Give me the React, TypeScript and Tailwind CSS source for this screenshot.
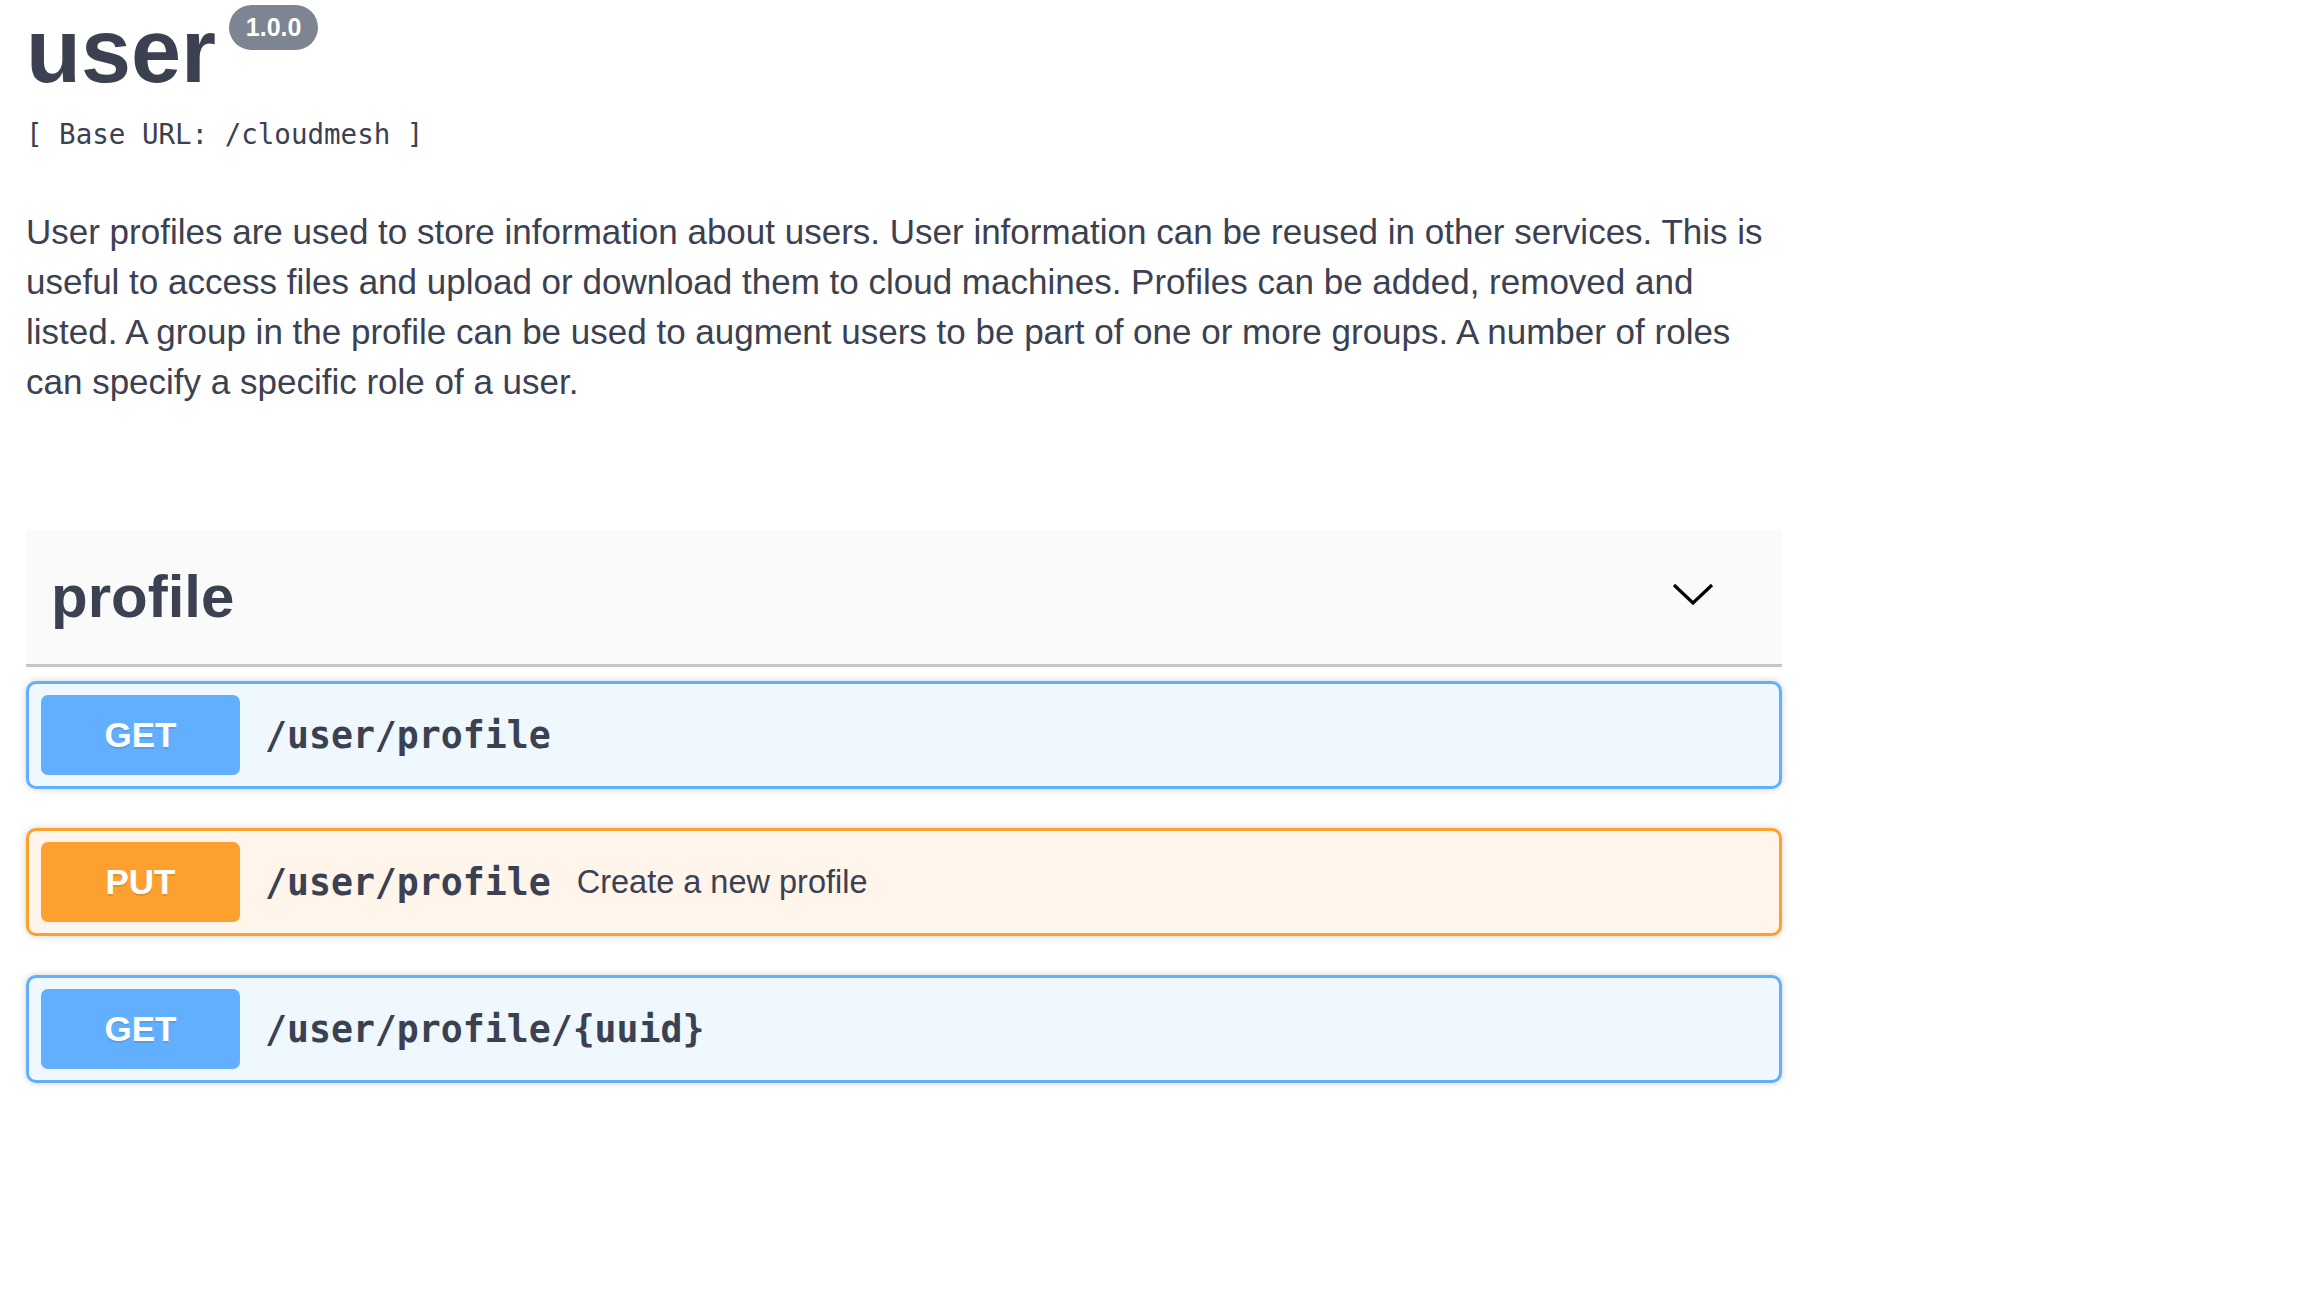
import React from 'react'

type Op = {
  method: 'GET' | 'PUT'
  path: string
  summary?: string
}

const OPS: Op[] = [
  { method: 'GET', path: '/user/profile' },
  { method: 'PUT', path: '/user/profile', summary: 'Create a new profile' },
  { method: 'GET', path: '/user/profile/{uuid}' },
]

function OpBlock({ op }: { op: Op }) {
  const isGet = op.method === 'GET'
  return (
    <div
      className={
        isGet
          ? 'flex items-center h-[108px] px-[12px] rounded-[10px] border-[3px] border-[#61affe] bg-[#eff7ff] shadow-[0_0_7px_rgba(0,0,0,0.19)]'
          : 'flex items-center h-[108px] px-[12px] rounded-[10px] border-[3px] border-[#fca130] bg-[#fff5ea] shadow-[0_0_7px_rgba(0,0,0,0.19)]'
      }
    >
      <div
        className={
          isGet
            ? 'flex items-center justify-center w-[199px] h-[80px] rounded-[7px] bg-[#61affe] text-white font-bold text-[35px] [text-shadow:0_2px_0_rgba(0,0,0,0.1)]'
            : 'flex items-center justify-center w-[199px] h-[80px] rounded-[7px] bg-[#fca130] text-white font-bold text-[35px] [text-shadow:0_2px_0_rgba(0,0,0,0.1)]'
        }
      >
        {op.method}
      </div>
      <span className="ml-[25px] mt-[2px] font-['DejaVu_Sans_Mono',monospace] font-bold text-[36.5px] text-[#3b4151]">
        {op.path}
      </span>
      {op.summary && (
        <span className="ml-[26px] text-[32.5px] text-[#3b4151]">{op.summary}</span>
      )}
    </div>
  )
}

export default function App() {
  return (
    <div className="min-h-screen bg-white font-['Liberation_Sans',Arial,sans-serif] text-[#3b4151]">
      <div className="w-[1756px] ml-[26px]">
        {/* info header */}
        <div className="flex items-start">
          <h1 className="mt-[6px] text-[90px] leading-[90px] font-bold">user</h1>
          <span className="mt-[5px] ml-[13px] flex items-center justify-center w-[89px] h-[45px] rounded-full bg-[#7d8492] text-white font-bold text-[25px]">
            1.0.0
          </span>
        </div>
        <pre className="mt-[25px] font-['DejaVu_Sans_Mono',monospace] text-[27.5px] leading-[27px]">
          [ Base URL: /cloudmesh ]
        </pre>
        <p className="mt-[59px] text-[35px] leading-[50px]">
          User profiles are used to store information about users. User information can be reused in other
          services. This is useful to access files and upload or download them to cloud machines. Profiles can be
          added, removed and listed. A group in the profile can be used to augment users to be part of one or more
          groups. A number of roles can specify a specific role of a user.
        </p>

        {/* tag section */}
        <div className="mt-[123px]">
          <div className="flex items-center justify-between h-[137px] pl-[25px] pr-[68px] bg-[#fafafa] border-b-[3px] border-[#c4c6cb]">
            <span className="text-[60px] leading-[60px] font-bold">profile</span>
            <svg width="42" height="22" viewBox="0 0 42 22" className="mb-[6px]">
              <polyline points="2,2 21,20 40,2" fill="none" stroke="#000" strokeWidth="3.2" />
            </svg>
          </div>
          <div className="flex flex-col gap-[39px] mt-[14px]">
            {OPS.map((op, i) => (
              <OpBlock key={i} op={op} />
            ))}
          </div>
        </div>
      </div>
    </div>
  )
}
